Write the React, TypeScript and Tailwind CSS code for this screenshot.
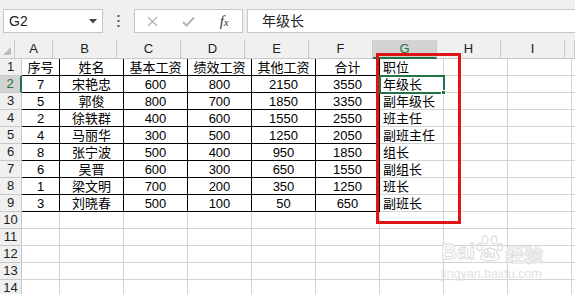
import React from "react";

const colWidths = [38, 64, 64, 64, 64, 64, 64, 64, 64, 10];
const colNames = ["A", "B", "C", "D", "E", "F", "G", "H", "I", ""];

const data: string[][] = [
  ["序号", "姓名", "基本工资", "绩效工资", "其他工资", "合计", "职位"],
  ["7", "宋艳忠", "600", "800", "2150", "3550", "年级长"],
  ["5", "郭俊", "800", "700", "1850", "3350", "副年级长"],
  ["2", "徐轶群", "400", "600", "1550", "2550", "班主任"],
  ["4", "马丽华", "300", "500", "1250", "2050", "副班主任"],
  ["8", "张宁波", "500", "400", "950", "1850", "组长"],
  ["6", "吴晋", "600", "300", "650", "1550", "副组长"],
  ["1", "梁文明", "700", "200", "350", "1250", "班长"],
  ["3", "刘晓春", "500", "100", "50", "650", "副班长"],
];

const font = { fontFamily: '"Liberation Sans", "Noto Sans CJK SC", sans-serif' };

export default function App() {
  const rows = Array.from({ length: 14 }, (_, i) => i + 1);
  return (
    <div className="relative w-[575px] h-[294px] overflow-hidden bg-[#f0f0f0] text-black" style={font}>
      {/* Toolbar */}
      <div className="h-[40px] flex items-center pt-[2px]">
        <div className="ml-[3px] w-[100px] h-[24px] bg-white border border-[#c6c6c6] flex items-center justify-between pl-[5px] pr-[5px]">
          <span className="text-[14px] text-[#222]">G2</span>
          <svg width="8" height="5" viewBox="0 0 8 5"><path d="M0 0 L8 0 L4 4.5 Z" fill="#444" /></svg>
        </div>
        <div className="w-[31px] flex justify-center">
          <svg width="3" height="12" viewBox="0 0 3 12">
            <rect x="0.5" y="0" width="2" height="2" fill="#555" />
            <rect x="0.5" y="5" width="2" height="2" fill="#555" />
            <rect x="0.5" y="10" width="2" height="2" fill="#555" />
          </svg>
        </div>
        <div className="w-[109px] h-[24px] bg-white border border-[#c6c6c6] flex items-center">
          <div className="w-[36px] flex justify-center">
            <svg width="11" height="11" viewBox="0 0 11 11"><path d="M1 1 L10 10 M10 1 L1 10" stroke="#b4b4b4" strokeWidth="1.4" /></svg>
          </div>
          <div className="w-[36px] flex justify-center">
            <svg width="13" height="11" viewBox="0 0 13 11"><path d="M1 6 L4.5 9.5 L12 1.5" stroke="#b4b4b4" strokeWidth="2" fill="none" /></svg>
          </div>
          <div className="w-[36px] flex justify-center">
            <span className="text-[15px] italic text-[#333] leading-none" style={{ fontFamily: '"Liberation Serif", serif' }}>
              f<span className="text-[11px]">x</span>
            </span>
          </div>
        </div>
        <div className="ml-[4px] flex-1 h-[24px] bg-white border border-r-0 border-[#c6c6c6] flex items-center pl-[14px]">
          <span className="text-[14px] text-[#222]">年级长</span>
        </div>
      </div>

      {/* Column header */}
      <div className="flex h-[19px] bg-[#f0f0f0]">
        <div className="w-[22px] h-full border-r border-b border-[#c8c8c8] relative">
          <svg className="absolute right-[3px] bottom-[3px]" width="8" height="8" viewBox="0 0 8 8"><path d="M8 0 L8 8 L0 8 Z" fill="#bcbcbc" /></svg>
        </div>
        {colNames.map((c, i) => {
          const sel = c === "G";
          return (
            <div
              key={i}
              style={{ width: colWidths[i] }}
              className={
                sel
                  ? "h-full shrink-0 flex items-center justify-center border-r border-[#c8c8c8] border-b-2 border-b-[#217346] bg-[#d3d3d3] text-[#217346] text-[13px]"
                  : "h-full shrink-0 flex items-center justify-center border-r border-b border-[#c8c8c8] text-[13px] text-[#222]"
              }
            >
              {c}
            </div>
          );
        })}
      </div>

      {/* Rows */}
      <div className="bg-white">
        {rows.map((r) => {
          const rowData = data[r - 1];
          const selRow = r === 2;
          return (
            <div key={r} className="flex h-[17px]">
              <div
                className={
                  selRow
                    ? "w-[22px] shrink-0 h-full flex items-center justify-center bg-[#d3d3d3] text-[#217346] border-r-2 border-r-[#217346] border-b border-b-[#c8c8c8] text-[13px]"
                    : "w-[22px] shrink-0 h-full flex items-center justify-center bg-[#f0f0f0] text-[#222] border-r border-b border-[#c8c8c8] text-[13px]"
                }
              >
                {r}
              </div>
              {colWidths.map((w, ci) => {
                const inData = rowData && ci < 6;
                const inG = rowData && ci === 6;
                const text = rowData && ci < 7 ? rowData[ci] : "";
                let cls = "h-full shrink-0 flex items-center text-[13px] leading-none border-r border-b ";
                if (inData) cls += "border-black justify-center ";
                else cls += "border-[#d4d4d4] ";
                if (inG) cls += "justify-start pl-[3px] ";
                return (
                  <div key={ci} style={{ width: w }} className={cls}>
                    {text}
                  </div>
                );
              })}
            </div>
          );
        })}
      </div>

      {/* Selected cell G2 */}
      <div className="absolute left-[379px] top-[75px] w-[66px] h-[19px] border-2 border-[#217346]" />
      <div className="absolute left-[441px] top-[90px] w-[5px] h-[5px] bg-[#217346] border border-white" />

      {/* Red highlight */}
      <div className="absolute left-[376px] top-[53px] w-[85px] h-[171px] border-[3px] border-[#e01414]" />

      {/* Watermark */}
      <div className="absolute left-[441px] top-[235px] flex flex-col items-start text-[#ebebeb] pointer-events-none">
        <div className="flex items-end h-[28px]">
          <span className="text-[22px] font-bold leading-none" style={{ fontFamily: '"Liberation Sans", sans-serif', WebkitTextStroke: "0.8px #dcdcdc", color: "#fafafa" }}>Bai</span>
          <div className="relative w-[28px] h-[28px] mx-[1px]">
            <svg className="absolute left-0 top-0" width="28" height="28" viewBox="0 0 28 28">
              <ellipse cx="9" cy="5" rx="3" ry="4" fill="none" stroke="#dedede" strokeWidth="1.3" />
              <ellipse cx="18" cy="5" rx="3" ry="4" fill="none" stroke="#dedede" strokeWidth="1.3" />
              <ellipse cx="3.5" cy="12" rx="2.5" ry="3.5" fill="none" stroke="#dedede" strokeWidth="1.3" />
              <ellipse cx="24" cy="12" rx="2.5" ry="3.5" fill="none" stroke="#dedede" strokeWidth="1.3" />
              <path d="M5 24 Q5 14 14 13 Q23 14 23 24 Q14 28 5 24 Z" fill="none" stroke="#dedede" strokeWidth="1.3" />
            </svg>
            <span className="absolute left-[7px] top-[15px] text-[10px] font-bold leading-none text-[#dcdcdc]">du</span>
          </div>
          <span className="text-[19px] font-bold leading-none" style={{ fontFamily: '"Noto Sans CJK SC", sans-serif', WebkitTextStroke: "0.8px #dcdcdc", color: "#fafafa" }}>经验</span>
        </div>
        <span className="mt-[5px] text-[12.5px] leading-none text-[#e2e2e2]" style={{ fontFamily: '"Liberation Sans", sans-serif' }}>jingyan.baidu.com</span>
      </div>
    </div>
  );
}
